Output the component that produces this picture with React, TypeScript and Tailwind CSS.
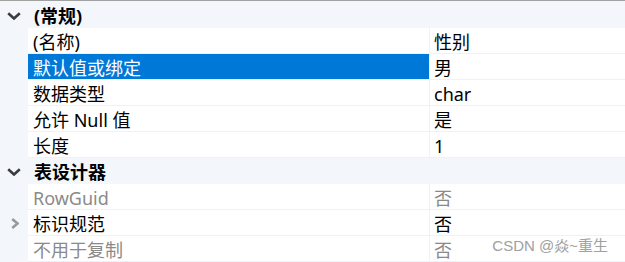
import React from "react";

type Prop = { name: string; value: string; selected?: boolean; muted?: boolean; expandable?: boolean };

const groups: { title: string; rows: Prop[] }[] = [
  {
    title: "(常规)",
    rows: [
      { name: "(名称)", value: "性别" },
      { name: "默认值或绑定", value: "男", selected: true },
      { name: "数据类型", value: "char" },
      { name: "允许 Null 值", value: "是" },
      { name: "长度", value: "1" },
    ],
  },
  {
    title: "表设计器",
    rows: [
      { name: "RowGuid", value: "否", muted: true },
      { name: "标识规范", value: "否", expandable: true },
      { name: "不用于复制", value: "否", muted: true },
    ],
  },
];

function ChevronDown() {
  return (
    <svg width="14" height="8" viewBox="0 0 14 8" className="text-[#3c3c3c]">
      <path d="M1.2 1.2 L7 6.5 L12.8 1.2" fill="none" stroke="currentColor" strokeWidth="2.6" />
    </svg>
  );
}

function ChevronRight() {
  return (
    <svg width="8" height="11" viewBox="0 0 8 11" className="text-[#9a9a9a]">
      <path d="M1.2 1 L6.5 5.5 L1.2 10" fill="none" stroke="currentColor" strokeWidth="2.6" />
    </svg>
  );
}

export default function App() {
  return (
    <div
      className="w-[625px] h-[262px] overflow-hidden bg-[#f3f6fb] border-t border-[#a0a0a0] pt-px text-[18px] leading-none text-black"
      style={{ fontFamily: '"Noto Sans", "Noto Sans CJK SC", sans-serif' }}
    >
      {groups.map((g) => (
        <div key={g.title}>
          <div className="flex h-[26px] items-center">
            <div className="w-[28px] flex justify-center pt-px">
              <ChevronDown />
            </div>
            <div className="pl-[6px] pt-[2px] font-bold">{g.title}</div>
          </div>
          {g.rows.map((r) => (
            <div key={r.name} className="flex h-[26px]">
              <div className="w-[28px] flex items-center justify-center pl-[2px]">
                {r.expandable && <ChevronRight />}
              </div>
              <div
                className={`w-[401px] flex items-center pl-[5px] pt-[2px] border-b border-[#eef1f7] ${
                  r.selected ? "bg-[#0078d7] text-white" : "bg-white"
                } ${r.muted ? "text-[#8a8a8a]" : ""}`}
              >
                {r.name}
              </div>
              <div
                className={`flex-1 flex items-center pl-[4px] pt-[2px] bg-white border-l border-b border-[#eef1f7] ${
                  r.muted ? "text-[#8a8a8a]" : ""
                }`}
              >
                {r.value}
              </div>
            </div>
          ))}
        </div>
      ))}
      <div className="relative">
        <div
          className="absolute right-[17px] bottom-[9px] text-[15px] text-[#a0a0a0]"
          style={{ fontFamily: '"Liberation Sans", "Noto Sans CJK SC", sans-serif' }}
        >
          CSDN @焱~重生
        </div>
      </div>
    </div>
  );
}
